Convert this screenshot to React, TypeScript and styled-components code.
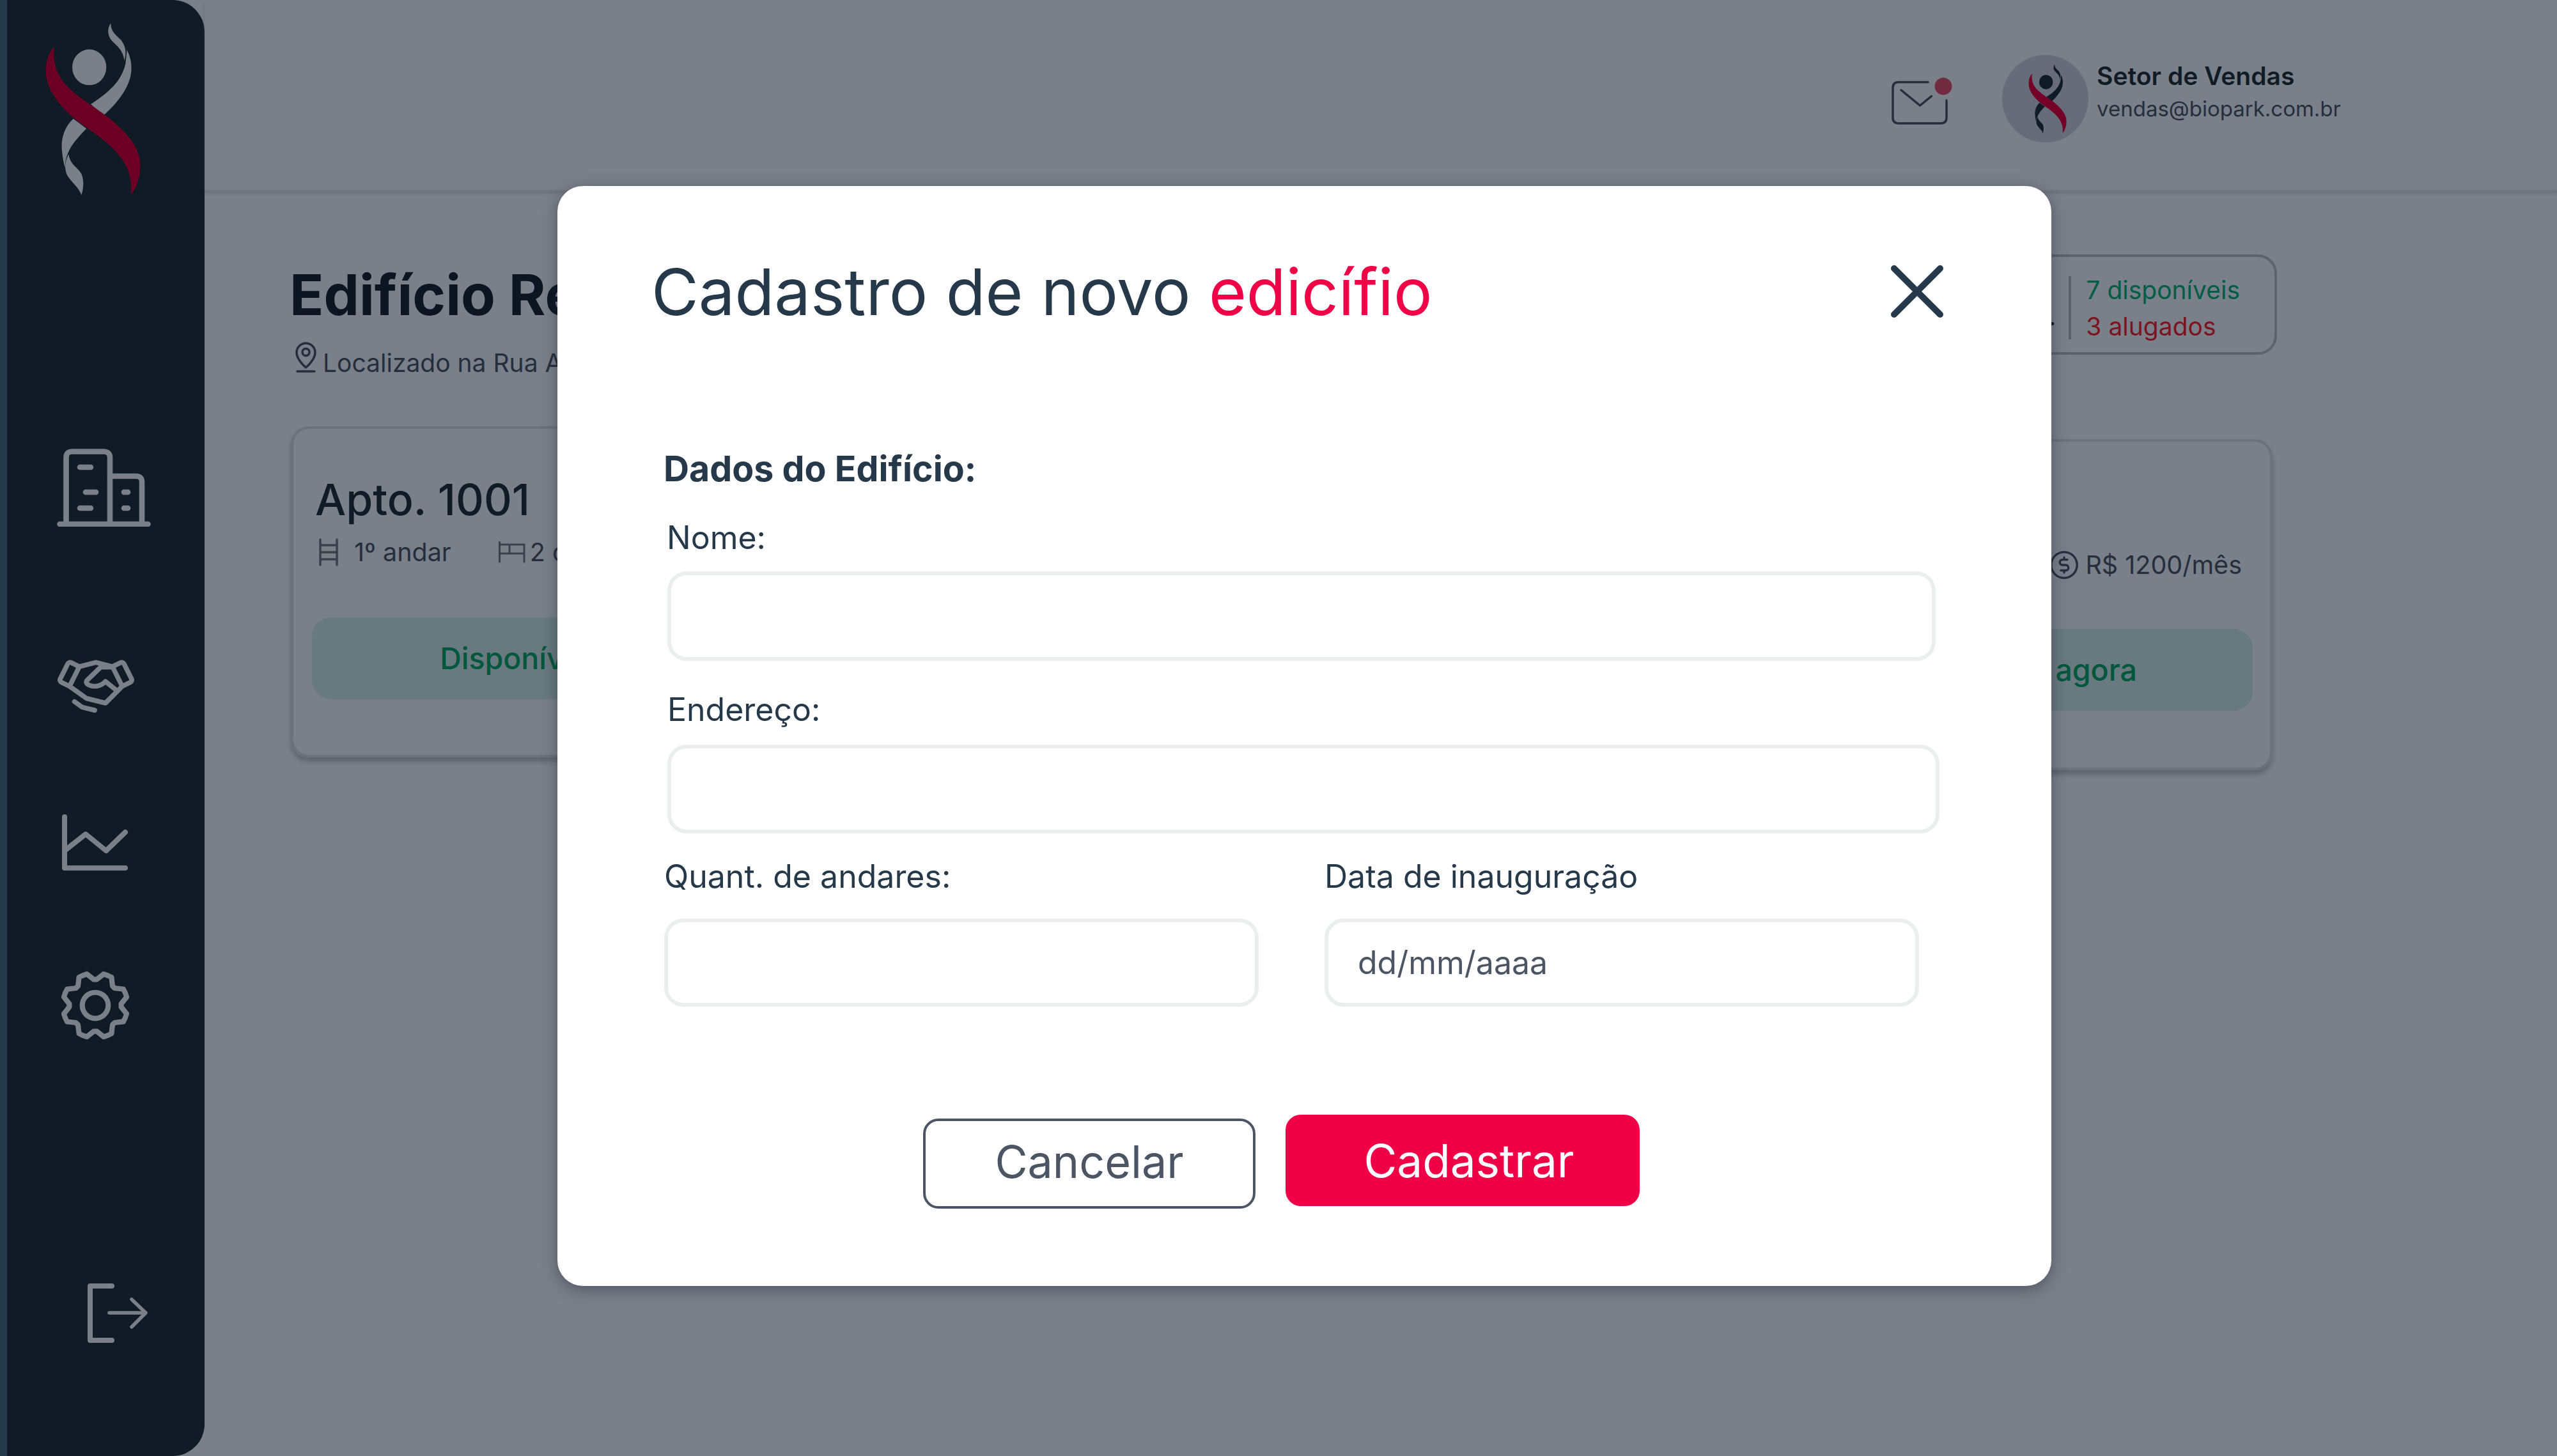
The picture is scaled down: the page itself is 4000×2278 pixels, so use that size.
import React from 'react';
import styled, { createGlobalStyle } from 'styled-components';
import { PiHandshake, PiGear, PiCurrencyCircleDollar } from 'react-icons/pi';

const Global = createGlobalStyle`
  html, body { margin: 0; padding: 0; background: #7a808a; }
  * { box-sizing: border-box; }
  body { font-family: Inter, "Liberation Sans", sans-serif; }
`;

const Page = styled.div`
  position: relative; width: 4000px; height: 2278px; overflow: hidden;
  display: flex; background: #7a808a;
`;
const Sidebar = styled.aside`
  width: 320px; height: 2278px; flex: none; display: flex; flex-direction: column; align-items: flex-start;
  background: #111b25; border-left: 11px solid #24394a; border-radius: 0 50px 50px 0;
  overflow: hidden; color: #7a808a;
`;
const SideItem = styled.div<{ $left: number; $top: number }>`
  display: flex; margin-left: ${p => p.$left}px; margin-top: ${p => p.$top}px;
`;
const Main = styled.main`flex: 1; display: flex; flex-direction: column; min-width: 0;`;
const Header = styled.header`
  height: 300px; flex: none; display: flex; justify-content: flex-end; align-items: flex-start;
  padding: 86px 338px 0 0; border-bottom: 3px solid #70767f; box-shadow: 0 2px 5px rgba(70,76,86,.35);
`;
const MailWrap = styled.div`display: flex; margin: 34px 78px 0 0;`;
const Avatar = styled.div`
  width: 135px; height: 137px; border-radius: 50%; background: #666d78; display: flex; align-items: center; justify-content: center;
  margin-right: 13px; flex: none; padding-left: 6px;
`;
const UserText = styled.div`display: flex; flex-direction: column; padding-top: 14px; gap: 15px;`;
const UserName = styled.div`font-size: 39px; line-height: 38px; font-weight: 600; color: #111b25;`;
const UserMail = styled.div`font-size: 33px; line-height: 35px; color: #262e3b;`;
const Content = styled.div`flex: 1; display: flex; justify-content: space-between; padding: 0 438px 0 135px;`;
const LeftCol = styled.section`width: 760px; display: flex; flex-direction: column; padding-top: 116px;`;
const RightCol = styled.section`width: 760px; display: flex; flex-direction: column; align-items: flex-end; padding-top: 98px;`;
const BuildingName = styled.h1`
  margin: 0 0 0 -2px; font-size: 88px; line-height: 90px; font-weight: 700; color: #0d1620; white-space: nowrap;
`;
const Location = styled.div`
  display: flex; align-items: flex-end; gap: 9px; margin: 31px 0 0 7px; font-size: 39px; line-height: 40px; color: #262e3b; white-space: nowrap;
  height: 46px;
`;
const LocationText = styled.span`position: relative; top: 5px;`;
const StatBox = styled.div`
  height: 157px; display: flex; justify-content: flex-end; padding: 30px 54px 0 0;
  border: 4px solid #5d636d; border-radius: 30px; width: 700px;
`;
const Summary = styled.div`
  align-self: flex-start; margin: 43px 20px 0 0; font-size: 40px; line-height: 40px; color: #111b25; white-space: nowrap;
`;
const Divider = styled.div`width: 4px; height: 99px; background: #5a606a; margin-right: 23px;`;
const Stats = styled.div`display: flex; flex-direction: column; gap: 17px; font-size: 39px; line-height: 40px; margin-top: 2px;`;
const Stat = styled.div<{ $c: string }>`color: ${p => p.$c}; white-space: nowrap;`;
const Card = styled.article<{ $top: number; $mr: number; $w: number }>`
  margin-top: ${p => p.$top}px; margin-right: ${p => p.$mr}px; width: ${p => p.$w}px; height: 518px; flex: none;
  border: 4px solid #6c727c; border-radius: 28px; box-shadow: 0 7px 7px rgba(40,46,56,.32);
  padding: 76px 27px 0 29px; display: flex; flex-direction: column;
`;
const CardTitle = styled.h2`margin: 0 0 0 5px; font-size: 68px; line-height: 68px; font-weight: 500; color: #111b25; white-space: nowrap;`;
const Meta = styled.div<{ $end?: boolean }>`
  margin-top: 28px; height: 42px; display: flex; align-items: center; gap: 74px; font-size: 39.5px; line-height: 40px; color: #262e3b;
  justify-content: ${p => (p.$end ? 'flex-end' : 'flex-start')}; padding: ${p => (p.$end ? '0 17px 0 0' : '0 0 0 10px')}; white-space: nowrap;
`;
const MetaItem = styled.span<{ $gap: number }>`display: flex; align-items: center; gap: ${p => p.$gap}px;`;
const CardAction = styled.div<{ $pl: number; $pr: number; $mt: number }>`
  margin-top: ${p => p.$mt}px; height: 128px; border-radius: 30px; background: #68797f; color: #00573c; font-size: 46.5px; font-weight: 500;
  display: flex; align-items: center; justify-content: center; white-space: nowrap;
  padding: 0 ${p => p.$pr}px 0 ${p => p.$pl}px;
`;

const Modal = styled.div`
  position: absolute; left: 872px; top: 291px; width: 2337px; height: 1721px; background: #fff; border-radius: 40px;
  box-shadow: 0 6px 24px rgba(30,36,48,.45); padding-top: 115px; display: flex; flex-direction: column; align-items: flex-start;
`;
const ModalHead = styled.div`align-self: stretch; display: flex; align-items: center; justify-content: space-between; padding: 0 169px 0 147px;`;
const Title = styled.h2`margin: 0; font-size: 101px; line-height: 100px; font-weight: 400; color: #26394a; white-space: nowrap;`;
const Accent = styled.span`color: #ef0047;`;
const CloseBtn = styled.button`border: 0; background: none; padding: 0; display: flex; cursor: pointer;`;
const Section = styled.h3`margin: 199px 0 0 166px; font-size: 55.5px; line-height: 56px; font-weight: 700; color: #26394a; white-space: nowrap;`;
const Label = styled.label<{ $left: number; $top: number }>`
  display: block; margin: ${p => p.$top}px 0 0 ${p => p.$left}px; font-size: 50px; line-height: 50px; color: #26394a; white-space: nowrap;
`;
const Field = styled.input<{ $w: number; $left: number; $top: number; $h: number }>`
  display: block; width: ${p => p.$w}px; height: ${p => p.$h}px; margin: ${p => p.$top}px 0 0 ${p => p.$left}px;
  border: 6px solid #ecedef; border-radius: 30px; background: #fff; outline: none; padding: 0 46px;
  font: 400 50px Inter, sans-serif; color: #4b5563;
  &::placeholder { color: #4b5563; opacity: 1; }
`;
const Row = styled.div`display: flex; margin-left: 167px; gap: 103px;`;
const Col = styled.div`display: flex; flex-direction: column; flex: none;`;
const Actions = styled.div`display: flex; align-items: flex-start; gap: 47px; margin: 169px 0 0 572px;`;
const Cancel = styled.button`
  width: 520px; height: 141px; margin-top: 6px; background: #fff; border: 4px solid #4b5563; border-radius: 24px; color: #4b5563;
  font: 400 70px Inter, sans-serif; padding: 0 0 6px;
`;
const Submit = styled.button`
  width: 554px; height: 143px; background: #ef0047; border: 0; border-radius: 24px; color: #fff;
  font: 400 71px Inter, sans-serif; padding: 0 0 0 20px;
`;

const Logo = ({ w, h, main, red }: { w: number; h: number; main: string; red: string }) => (
  <svg width={w} height={h} viewBox="205 100 465 825" fill={main}>
    <ellipse cx="420" cy="317" rx="80" ry="84" />
    <path d="M427 490C510 435 570 385 590 300L597 235C612 265 622 305 616 345C605 420 545 490 487 543Z" />
    <path d="M521 110C506 130 504 160 520 185C540 212 575 225 585 285C595 250 592 220 570 190C545 165 520 150 521 110Z" />
    <path d="M345 558C305 595 285 650 292 710C295 745 300 765 306 790C305 745 325 700 350 668C365 650 385 625 407 605Z" />
    <path d="M323 725C303 765 302 800 320 830C340 860 370 880 383 917C392 890 398 850 382 815C365 785 330 775 323 725Z" />
    <path fill={red} d="M256 220C225 250 212 300 218 360C228 430 285 505 360 565C430 620 520 670 575 750C605 795 622 850 615 915C650 875 665 810 657 750C645 670 570 600 500 545C440 500 370 460 320 410C275 365 245 300 256 220Z" />
  </svg>
);

const Building = () => (
  <svg width="147" height="122" viewBox="89 702 147 122" fill="none" stroke="currentColor" strokeWidth="8.6" strokeLinecap="round" strokeLinejoin="round">
    <path d="M93.5 820H231.5" />
    <path d="M103.5 820V716Q103.500 706.500 113 706.500H162Q172 706.500 172 716V820" />
    <path d="M172 745H213Q222 745 222 754V820" />
    <path d="M125 731H142M134 770H150M125 795H142M194 770H200M194 795H200" />
  </svg>
);
const Chart = () => (
  <svg width="104" height="88" viewBox="97 1274 104 88" fill="none" stroke="currentColor" strokeWidth="8" strokeLinecap="round" strokeLinejoin="round">
    <path d="M101 1278V1358H196" />
    <path d="M101 1331L134 1305L166 1331L196 1302" />
  </svg>
);
const LogOut = () => (
  <svg width="96" height="94" viewBox="137 2008 96 94" fill="none" stroke="currentColor" strokeLinecap="round" strokeLinejoin="round">
    <path strokeWidth="8" d="M175 2012H141V2097H175" />
    <path strokeWidth="5.500" d="M171 2054H228M206 2033L228 2054L206 2076" />
  </svg>
);
const Mail = () => (
  <svg width="96" height="78" viewBox="2960 120 96 78" fill="none">
    <path stroke="#262e3b" strokeWidth="3.500" strokeLinecap="round" d="M3018 128.500H2972Q2963 128.500 2963 137.500V184Q2963 193 2972 193H3038Q3047 193 3047 184V157M2976 141L3005.500 165L3023.500 150.500" />
    <circle cx="3042" cy="135" r="13.500" fill="#722c3f" />
  </svg>
);
const PinIcon = () => (
  <svg width="34" height="48" viewBox="461 536 34 48" fill="none" stroke="#262e3b" strokeWidth="3.500" strokeLinecap="round" strokeLinejoin="round" style={{ flex: 'none' }}>
    <path d="M477.500 576C477.500 576 463 564 463 552.500A14.500 14.500 0 0 1 492 552.500C492 564 477.500 576 477.500 576Z" />
    <circle cx="477.500" cy="552" r="5.500" />
    <path d="M464 582H491" />
  </svg>
);
const LadderIcon = () => (
  <svg width="32" height="44" viewBox="499 841 32 44" fill="none" stroke="#3a414d" strokeWidth="3.500" strokeLinecap="round">
    <path d="M502 843V883M528 843V883M502 852H528M502 863H528M502 874H528" />
  </svg>
);
const BedIcon = () => (
  <svg width="42" height="34" viewBox="780 846 42 34" fill="none" stroke="#3a414d" strokeWidth="3" strokeLinecap="round">
    <path d="M781.500 847V878M781.500 851H820V878M781.500 865H820M797 851V865" />
  </svg>
);
const CloseIcon = () => (
  <svg width="82" height="82" viewBox="2958 413 82 82" fill="none" stroke="#26394a" strokeWidth="10" strokeLinecap="round">
    <path d="M2963 418L3035 490M3035 418L2963 490" />
  </svg>
);

export default function App() {
  return (
    <Page>
      <Global />
      <Sidebar>
        <SideItem $left={57} $top={33}><Logo w={155} h={275} main="#7a808a" red="#6b0024" /></SideItem>
        <SideItem $left={78} $top={394}><Building /></SideItem>
        <SideItem $left={79} $top={186}><PiHandshake size={120} /></SideItem>
        <SideItem $left={86} $top={144}><Chart /></SideItem>
        <SideItem $left={73} $top={146}><PiGear size={130} /></SideItem>
        <SideItem $left={126} $top={370}><LogOut /></SideItem>
      </Sidebar>
      <Main>
        <Header>
          <MailWrap><Mail /></MailWrap>
          <Avatar><Logo w={62} h={111} main="#111b25" red="#740028" /></Avatar>
          <UserText>
            <UserName>Setor de Vendas</UserName>
            <UserMail>vendas@biopark.com.br</UserMail>
          </UserText>
        </Header>
        <Content>
          <LeftCol>
            <BuildingName>Edifício Res</BuildingName>
            <Location><PinIcon /><LocationText>Localizado na Rua A</LocationText></Location>
            <Card $top={84} $mr={0} $w={710}>
              <CardTitle>Apto. 1001</CardTitle>
              <Meta>
                <MetaItem $gap={24}><LadderIcon />1º andar</MetaItem>
                <MetaItem $gap={7}><BedIcon />2 quartos</MetaItem>
              </Meta>
              <CardAction $pl={0} $pr={14} $mt={81}>Disponível</CardAction>
            </Card>
          </LeftCol>
          <RightCol>
            <StatBox>
              <Summary>10 apartamentos.</Summary>
              <Divider />
              <Stats>
                <Stat $c="#005c45">7 disponíveis</Stat>
                <Stat $c="#7a1420">3 alugados</Stat>
              </Stats>
            </StatBox>
            <Card $top={132} $mr={7} $w={752}>
              <CardTitle>Apto. 1002</CardTitle>
              <Meta $end>
                <MetaItem $gap={6}><PiCurrencyCircleDollar size={54} />R$ 1200/mês</MetaItem>
              </Meta>
              <CardAction $pl={40} $pr={0} $mt={79}>Alugar agora</CardAction>
            </Card>
          </RightCol>
        </Content>
      </Main>
      <Modal>
        <ModalHead>
          <Title>Cadastro de novo <Accent>edicífio</Accent></Title>
          <CloseBtn aria-label="Fechar"><CloseIcon /></CloseBtn>
        </ModalHead>
        <Section>Dados do Edifício:</Section>
        <Label $left={171} $top={55}>Nome:</Label>
        <Field $w={1984} $h={140} $left={172} $top={28} />
        <Label $left={172} $top={51}>Endereço:</Label>
        <Field $w={1990} $h={139} $left={172} $top={30} />
        <Row>
          <Col>
            <Label $left={0} $top={42}>Quant. de andares:</Label>
            <Field $w={930} $h={138} $left={0} $top={41} />
          </Col>
          <Col>
            <Label $left={0} $top={42}>Data de inauguração</Label>
            <Field $w={930} $h={138} $left={0} $top={41} placeholder="dd/mm/aaaa" />
          </Col>
        </Row>
        <Actions>
          <Cancel>Cancelar</Cancel>
          <Submit>Cadastrar</Submit>
        </Actions>
      </Modal>
    </Page>
  );
}
